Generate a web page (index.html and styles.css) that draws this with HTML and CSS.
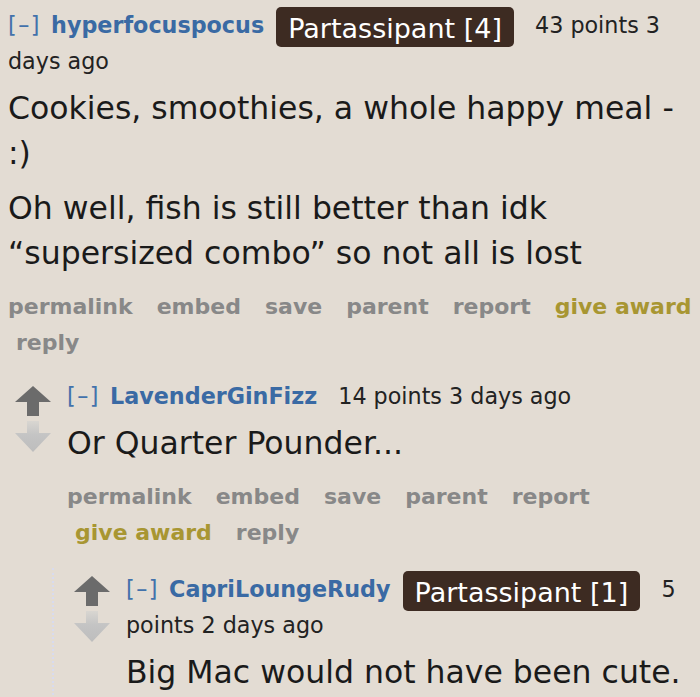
FILE: index.html
```html
<!DOCTYPE html>
<html lang="en">
<head>
<meta charset="utf-8">
<title>Comments</title>
<link rel="stylesheet" href="styles.css">
</head>
<body>
<div class="thread">
  <div class="entry">
    <p class="tagline"><a class="expand">[–]</a> <a class="author">hyperfocuspocus</a> <span class="flair">Partassipant [4]</span> <span class="score">43 points</span> <time>3 days ago</time></p>
    <div class="md">
      <p>Cookies, smoothies, a whole happy meal - :)</p>
      <p>Oh well, fish is still better than idk “supersized combo” so not all is lost</p>
    </div>
    <ul class="buttons">
      <li>permalink</li>
      <li>embed</li>
      <li>save</li>
      <li>parent</li>
      <li>report</li>
      <li class="award">give award</li>
      <li>reply</li>
    </ul>

    <div class="child">
      <div class="comment">
        <div class="midcol">
          <svg class="arrow" width="36" height="30" viewBox="0 0 36 30"><polygon points="18,0 36,16 24,16 24,30 12,30 12,16 0,16" fill="#6b6b6b"/></svg>
          <svg class="arrow" width="36" height="31" viewBox="0 0 36 31"><defs><linearGradient id="dg1" x1="0" y1="0" x2="0" y2="1"><stop offset="0" stop-color="#d9d6d1"/><stop offset="0.45" stop-color="#c4c4c4"/><stop offset="1" stop-color="#bdbdbd"/></linearGradient></defs><polygon points="12,0 24,0 24,12 36,12 18,31 0,12 12,12" fill="url(#dg1)"/></svg>
        </div>
        <div class="entry">
          <p class="tagline"><a class="expand">[–]</a> <a class="author">LavenderGinFizz</a> <span class="score">14 points</span> <time>3 days ago</time></p>
          <div class="md">
            <p>Or Quarter Pounder...</p>
          </div>
          <ul class="buttons">
            <li>permalink</li>
            <li>embed</li>
            <li>save</li>
            <li>parent</li>
            <li>report</li>
            <li class="award">give award</li>
            <li>reply</li>
          </ul>

          <div class="child">
            <div class="comment">
              <div class="midcol">
                <svg class="arrow" width="36" height="30" viewBox="0 0 36 30"><polygon points="18,0 36,16 24,16 24,30 12,30 12,16 0,16" fill="#6b6b6b"/></svg>
                <svg class="arrow" width="36" height="31" viewBox="0 0 36 31"><defs><linearGradient id="dg2" x1="0" y1="0" x2="0" y2="1"><stop offset="0" stop-color="#d9d6d1"/><stop offset="0.45" stop-color="#c4c4c4"/><stop offset="1" stop-color="#bdbdbd"/></linearGradient></defs><polygon points="12,0 24,0 24,12 36,12 18,31 0,12 12,12" fill="url(#dg2)"/></svg>
              </div>
              <div class="entry">
                <p class="tagline"><a class="expand">[–]</a> <a class="author">CapriLoungeRudy</a> <span class="flair">Partassipant [1]</span> <span class="score">5 points</span> <time>2 days ago</time></p>
                <div class="md">
                  <p>Big Mac would not have been cute.</p>
                </div>
              </div>
            </div>
          </div>
        </div>
      </div>
    </div>
  </div>
</div>
</body>
</html>
```
FILE: styles.css
```css
html, body {
  margin: 0;
  height: 100%;
  overflow: hidden;
}

body {
  background: #e3dcd3;
  font-family: "DejaVu Sans", Verdana, sans-serif;
  color: #222;
}

.thread {
  padding: 4px 0 0 8px;
}

.tagline {
  margin: 0;
  font-size: 22.25px;
  line-height: 36px;
  color: #222;
}

.expand {
  color: #4272ab;
  letter-spacing: 1.5px;
  margin-right: 3px;
}

.author {
  color: #3a6aa4;
  font-weight: bold;
}

.flair {
  display: inline-block;
  white-space: nowrap;
  background: #3d2b22;
  color: #fff;
  font-size: 27px;
  line-height: 31px;
  padding: 6px 12px 3px;
  border-radius: 5px;
  margin: 3px 0 -4px 5px;
  vertical-align: -5px;
}

.score {
  margin-left: 14px;
}

.md {
  font-size: 31.5px;
  line-height: 45px;
  color: #1a1a1a;
  margin-top: 7px;
}

.md p {
  margin: 0;
}

.md p + p {
  margin-top: 10px;
}

.buttons {
  list-style: none;
  margin: 13px 0 0;
  padding: 0;
  display: flex;
  flex-wrap: wrap;
  column-gap: 16px;
  font-size: 22px;
  font-weight: bold;
  line-height: 36px;
  color: #888;
}

.buttons li + li {
  padding-left: 8px;
}

.buttons .award {
  color: #a89632;
}

.child {
  margin: 17px 0 0 -15px;
  border-left: 2px dotted #d8dbee;
  padding-left: 20px;
}

.comment {
  display: flex;
}

.midcol {
  flex: none;
  width: 36px;
  margin: 8px 16px 0 0;
  display: flex;
  flex-direction: column;
  gap: 5px;
}

.arrow {
  display: block;
}

.entry {
  flex: 1;
  min-width: 0;
}
```
